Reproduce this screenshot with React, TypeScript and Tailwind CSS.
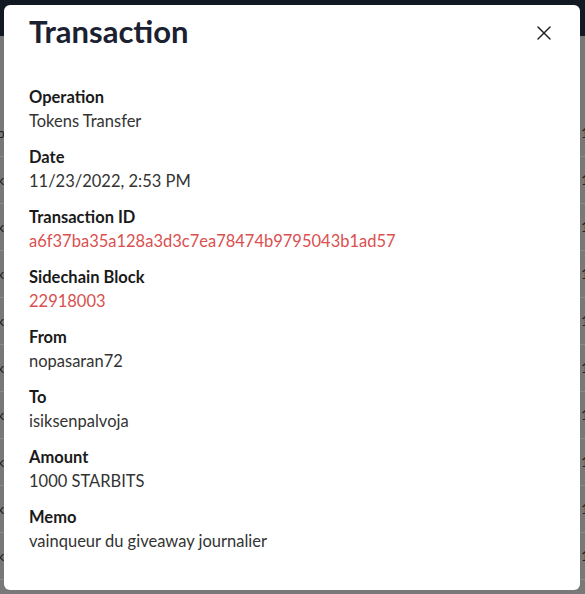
import React from 'react'
import { X } from 'lucide-react'

const fields: { label: string; value: string; link?: boolean }[] = [
  { label: 'Operation', value: 'Tokens Transfer' },
  { label: 'Date', value: '11/23/2022, 2:53 PM' },
  { label: 'Transaction ID', value: 'a6f37ba35a128a3d3c7ea78474b9795043b1ad57', link: true },
  { label: 'Sidechain Block', value: '22918003', link: true },
  { label: 'From', value: 'nopasaran72' },
  { label: 'To', value: 'isiksenpalvoja' },
  { label: 'Amount', value: '1000 STARBITS' },
  { label: 'Memo', value: 'vainqueur du giveaway journalier' },
]

const App: React.FC = () => {
  return (
    <div className="relative w-[585px] h-[594px] overflow-hidden bg-[#787878] font-['Lato',sans-serif]">
      {/* Page behind the overlay */}
      <div className="h-9 bg-[#131922]" />
      <div className="flex flex-col pt-[74px]">
        {Array.from({ length: 10 }).map((_, i) => (
          <div
            key={i}
            className="h-[47px] border-b border-[#8a8a8a] flex items-center justify-between text-sm text-[#1e1e1e]"
          >
            <span className="-ml-[3px]">{i === 0 ? 'p' : 'k'}</span>
            <span className="-mr-[4px]">1</span>
          </div>
        ))}
      </div>

      {/* Modal */}
      <div className="absolute left-1 top-[5px] w-[576px] h-[585px] rounded-md bg-white pl-[25px] pr-6 pt-2">
        <div className="flex items-center justify-between">
          <h2 className="text-[31px] leading-9 font-bold text-[#1b2130]">Transaction</h2>
          <button className="text-[#222] mt-[4px]">
            <X size={24} strokeWidth={1.5} />
          </button>
        </div>

        <div className="mt-9 flex flex-col gap-3">
          {fields.map((f) => (
            <div key={f.label} className="flex flex-col">
              <span className="text-[16.5px] leading-6 font-bold text-[#1a1a1a]">{f.label}</span>
              <span
                className={
                  f.link
                    ? 'text-[16.5px] leading-6 text-[#d9504f]'
                    : 'text-[16.5px] leading-6 text-[#333333]'
                }
              >
                {f.value}
              </span>
            </div>
          ))}
        </div>
      </div>
    </div>
  )
}

export default App
